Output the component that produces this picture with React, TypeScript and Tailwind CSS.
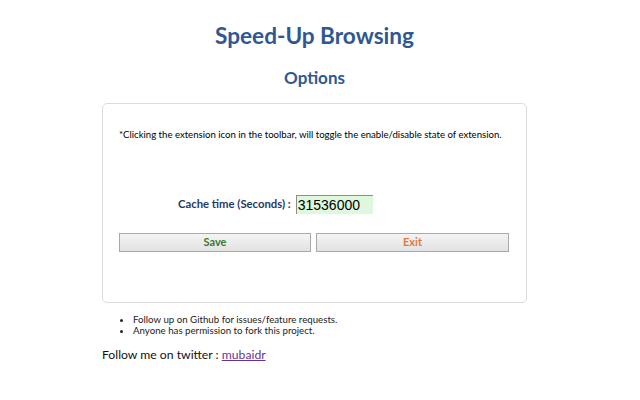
export default function App() {
  return (
    <div className="w-[629px] h-[400px] bg-white font-['Lato',sans-serif] text-black">
      <h1 className="pt-[21px] text-center text-[22.6px] leading-[30px] font-bold text-[#2f5891]">Speed-Up Browsing</h1>
      <h2 className="mt-[16px] text-center text-[17px] leading-[22px] font-bold text-[#2f5891]">Options</h2>
      <div className="mx-[102px] mt-[14px] h-[200px] rounded-[5px] border border-[#dcdcdc] px-[16px] pt-[24px]">
        <p className="text-[9.6px] leading-[14px] whitespace-nowrap">
          *Clicking the extension icon in the toolbar, will toggle the enable/disable state of extension.
        </p>
        <div className="mt-[53px] flex items-center pl-[59px]">
          <span className="text-[11.3px] font-bold text-[#1f3a63]">Cache time (Seconds) :</span>
          <div className="ml-[5px] h-[19px] w-[77px] border-t border-l border-[#8c8c8c] bg-[#ddf8dd] pl-[1px] font-['Liberation_Sans',sans-serif] text-[14px] leading-[18px]">
            31536000
          </div>
        </div>
        <div className="mt-[19px] flex gap-[5px] pr-[1px]">
          <button className="h-[19px] w-[193px] border border-[#a9a9a9] bg-gradient-to-b from-[#f4f4f4] to-[#e2e2e2] text-[11px] font-bold text-[#3b7a2b]">
            Save
          </button>
          <button className="h-[19px] w-[194px] border border-[#a9a9a9] bg-gradient-to-b from-[#f4f4f4] to-[#e2e2e2] text-[11px] font-bold text-[#e07a3c]">
            Exit
          </button>
        </div>
      </div>
      <ul className="ml-[124px] mt-[11px] list-disc pl-[9px] text-[9.7px] leading-[11px] text-[#222]">
        <li>Follow up on Github for issues/feature requests.</li>
        <li>Anyone has permission to fork this project.</li>
      </ul>
      <p className="ml-[102px] mt-[11px] text-[12.2px] leading-[16px] text-[#111]">
        Follow me on twitter : <a className="text-[#663399] underline" href="#">mubaidr</a>
      </p>
    </div>
  );
}
